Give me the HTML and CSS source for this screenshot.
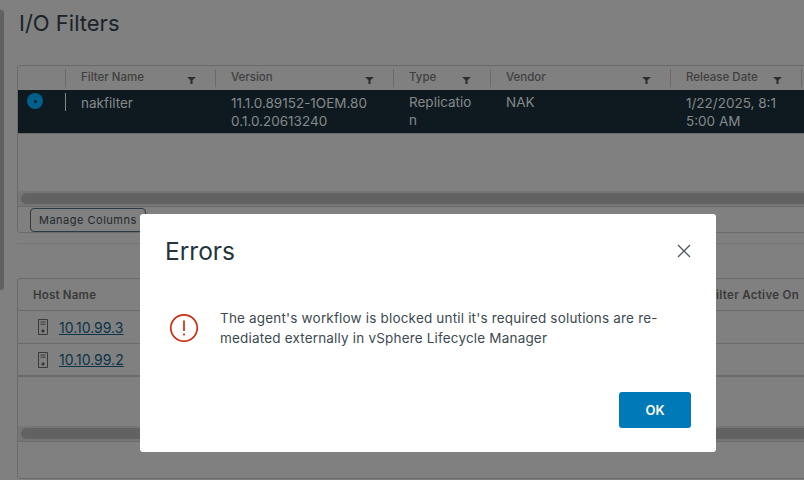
FILE: index.html
```html
<!DOCTYPE html>
<html lang="en">
<head>
    <meta charset="UTF-8">
    <title>I/O Filters</title>
    <link rel="stylesheet" href="styles.css">
</head>
<body>
    <div class="page">
        <div class="page-scroll"></div>
        <h1>I/O Filters</h1>

        <div class="grid grid-filters">
            <div class="row head">
                <div class="cell c-select"></div>
                <div class="cell c-name">Filter Name<svg class="funnel" viewBox="0 0 10 8"><path d="M0 0H10L6.2 3.6V8H3.8V3.6Z"/></svg></div>
                <div class="cell c-version">Version<svg class="funnel" viewBox="0 0 10 8"><path d="M0 0H10L6.2 3.6V8H3.8V3.6Z"/></svg></div>
                <div class="cell c-type">Type<svg class="funnel" viewBox="0 0 10 8"><path d="M0 0H10L6.2 3.6V8H3.8V3.6Z"/></svg></div>
                <div class="cell c-vendor">Vendor<svg class="funnel" viewBox="0 0 10 8"><path d="M0 0H10L6.2 3.6V8H3.8V3.6Z"/></svg></div>
                <div class="cell c-date">Release Date<svg class="funnel" viewBox="0 0 10 8"><path d="M0 0H10L6.2 3.6V8H3.8V3.6Z"/></svg></div>
            </div>
            <div class="row selected">
                <div class="cell c-select"><span class="radio"></span></div>
                <div class="cell c-name">nakfilter</div>
                <div class="cell c-version">11.1.0.89152-1OEM.80<br>0.1.0.20613240</div>
                <div class="cell c-type">Replicatio<br>n</div>
                <div class="cell c-vendor">NAK</div>
                <div class="cell c-date">1/22/2025, 8:1<br>5:00 AM</div>
            </div>
            <div class="grid-space space-filters"></div>
            <div class="hscroll"><div class="thumb"></div></div>
            <div class="grid-foot foot-filters">
                <button class="manage">Manage Columns</button>
            </div>
        </div>

        <div class="divider"></div>

        <div class="grid grid-hosts">
            <div class="row head hosts-head">
                <div class="cell c-host">Host Name</div>
                <div class="cell c-active">Filter Active On</div>
            </div>
            <div class="row host-row">
                <div class="cell c-host">
                    <svg class="server" viewBox="0 0 10 16"><path d="M.5.5H9.5V15.5H.5ZM2.5 3H7.5M2.5 5.2H7.5" fill="none"/><circle cx="5" cy="12" r="1.2"/></svg>
                    <a href="#">10.10.99.3</a>
                </div>
            </div>
            <div class="row host-row last">
                <div class="cell c-host">
                    <svg class="server" viewBox="0 0 10 16"><path d="M.5.5H9.5V15.5H.5ZM2.5 3H7.5M2.5 5.2H7.5" fill="none"/><circle cx="5" cy="12" r="1.2"/></svg>
                    <a href="#">10.10.99.2</a>
                </div>
            </div>
            <div class="grid-space space-hosts"></div>
            <div class="hscroll"><div class="thumb"></div></div>
            <div class="grid-foot foot-hosts"></div>
        </div>
    </div>

    <div class="modal">
        <div class="modal-head">
            <h2>Errors</h2>
            <svg class="close" viewBox="0 0 14 14"><path d="M1 1L13 13M13 1L1 13"/></svg>
        </div>
        <div class="modal-body">
            <svg class="error-icon" viewBox="0 0 30 30">
                <circle cx="15" cy="15" r="13.2"/>
                <path d="M15 7.5V18"/>
                <circle class="dot" cx="15" cy="21.5" r="1.1"/>
            </svg>
            <p>The agent's workflow is blocked until it's required solutions are re-<br>mediated externally in vSphere Lifecycle Manager</p>
        </div>
        <div class="modal-foot">
            <button class="ok">OK</button>
        </div>
    </div>
</body>
</html>
```

FILE: styles.css
```css
html, body {
    margin: 0;
    height: 100%;
    overflow: hidden;
}
body {
    font-family: Inter, "Open Sans", sans-serif;
    background-color: #808080;
    color: #1d262b;
}
.page {
    width: 840px;
    height: 480px;
    padding-left: 17px;
    box-sizing: border-box;
}
.page-scroll {
    position: absolute;
    left: 0;
    top: 10px;
    width: 4px;
    height: 280px;
    background-color: #616161;
    border-radius: 0 3px 3px 0;
}
h1 {
    margin: 0;
    padding: 8px 0 0 2px;
    height: 65px;
    box-sizing: border-box;
    font-size: 22px;
    line-height: 30px;
    font-weight: 400;
    color: #1b2328;
}
.grid {
    border: 1px solid #6b6b6b;
    border-radius: 3px;
    box-sizing: border-box;
}
.grid-filters {
    height: 168px;
}
.grid-hosts {
    height: 201px;
}
.divider {
    height: 1px;
    margin: 10px 0 34px;
    background-color: #747474;
}
.row {
    display: flex;
}
.head {
    height: 24px;
    font-size: 11.5px;
    font-weight: 500;
    color: #3f3f3f;
}
.head .cell {
    position: relative;
    line-height: 16px;
    height: 18px;
    margin-top: 3px;
    border-right: 1px solid #6b6b6b;
}
.head .cell > .funnel {
    position: absolute;
    top: 8px;
    right: 19px;
    width: 9px;
    height: 7px;
    fill: #2e2e2e;
}
.cell {
    box-sizing: border-box;
    padding-left: 15px;
    flex: none;
}
.c-select { width: 48px; padding: 0; }
.c-name { width: 150px; }
.c-version { width: 178px; }
.c-type { width: 97px; }
.c-vendor { width: 180px; }
.c-date { width: 131px; }
.selected {
    height: 44px;
    background-color: #0f1a20;
    border-bottom: 1px solid #6b6b6b;
    box-sizing: border-box;
    color: #85898b;
    font-size: 13.5px;
    line-height: 18px;
    padding-top: 3px;
}
.selected .cell {
    height: 32px;
}
.selected .c-select {
    position: relative;
    height: 18px;
    border-right: 1px solid #85898b;
}
.selected .c-name,
.selected .c-version,
.selected .c-date {
    padding-top: 1px;
}
.radio {
    display: block;
    width: 16px;
    height: 16px;
    margin: 0 0 0 9px;
    border-radius: 50%;
    background-color: #005f8b;
    position: relative;
}
.radio::after {
    content: "";
    position: absolute;
    left: 6.5px;
    top: 6.5px;
    width: 3px;
    height: 3px;
    border-radius: 50%;
    background-color: #0f1a20;
}
.space-filters {
    height: 57px;
}
.hscroll {
    height: 15px;
    background-color: #767676;
    padding: 2px 0 0 3px;
    box-sizing: border-box;
    border-bottom: 1px solid #767676;
}
.thumb {
    height: 11px;
    border-radius: 6px;
    background-color: #626262;
}
.grid-foot {
    border-top: 1px solid #6b6b6b;
    box-sizing: border-box;
}
.foot-filters {
    height: 25px;
    padding-left: 12px;
}
.manage {
    display: block;
    margin: 1px 0 0;
    padding: 0 8px;
    width: 116px;
    height: 24px;
    background-color: #808080;
    border: 1px solid #2d3a40;
    border-radius: 4px;
    font-family: inherit;
    font-size: 11px;
    letter-spacing: .5px;
    color: #22292d;
    text-align: left;
    white-space: nowrap;
}
.hosts-head {
    height: 32px;
    justify-content: space-between;
    border-bottom: 1px solid #6b6b6b;
    box-sizing: border-box;
}
.hosts-head .cell {
    border: 0;
    margin: 0;
    height: auto;
    line-height: 32px;
    font-weight: 600;
    letter-spacing: .2px;
    color: #3a3a3a;
}
.hosts-head .c-host {
    padding-left: 15px;
}
.hosts-head .c-active {
    padding: 0 40px 0 0;
    letter-spacing: .3px;
}
.host-row {
    height: 33px;
    border-bottom: 1px solid #6b6b6b;
    box-sizing: border-box;
}
.host-row.last {
    border-bottom-width: 2px;
}
.c-host {
    display: flex;
    align-items: center;
    padding-left: 20px;
    gap: 11px;
    width: 200px;
}
.server {
    width: 10px;
    height: 16px;
    stroke: #3a3a3a;
    fill: #3a3a3a;
    stroke-width: 1;
}
.c-host a {
    color: #0c3448;
    font-size: 14px;
    text-decoration: underline;
}
.space-hosts {
    height: 49px;
}
.foot-hosts {
    height: 38px;
}

.modal {
    position: absolute;
    left: 140px;
    top: 214px;
    width: 576px;
    height: 238px;
    background-color: #fff;
    border-radius: 3px;
    display: flex;
    flex-direction: column;
    color: #3d4a50;
}
.modal-head {
    display: flex;
    justify-content: space-between;
    align-items: center;
    padding: 20px 25px 0;
    height: 54px;
    box-sizing: border-box;
}
.modal h2 {
    margin: 0;
    font-size: 24.5px;
    line-height: 34px;
    font-weight: 400;
    color: #24343c;
}
.close {
    width: 14px;
    height: 14px;
    fill: none;
    stroke: #4a5459;
    stroke-width: 1.3;
}
.modal-body {
    display: flex;
    gap: 21px;
    padding: 40px 25px 0 29px;
    flex: 1;
}
.error-icon {
    flex: none;
    width: 30px;
    height: 30px;
    margin-top: 5px;
    fill: none;
    stroke: #c9300f;
    stroke-width: 1.7;
}
.error-icon .dot {
    fill: #c9300f;
    stroke: none;
}
.modal p {
    margin: 0;
    font-size: 13.5px;
    line-height: 20px;
    letter-spacing: .18px;
    white-space: nowrap;
}
.modal-foot {
    display: flex;
    justify-content: flex-end;
    padding: 0 25px 24px;
}
.ok {
    width: 72px;
    height: 36px;
    border: 0;
    border-radius: 3px;
    background-color: #0079b8;
    color: #fff;
    font-family: inherit;
    font-size: 13px;
    font-weight: 600;
}
```
